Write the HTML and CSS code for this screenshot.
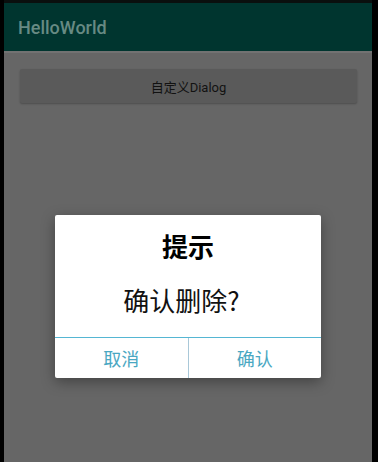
FILE: index.html
```html
<!DOCTYPE html>
<html lang="zh">
<head>
<meta charset="utf-8">
<title>HelloWorld</title>
<link rel="stylesheet" href="styles.css">
</head>
<body>
<div class="screen">
  <div class="app">
    <div class="statusbar"></div>
    <div class="toolbar"><span class="toolbar-title">HelloWorld</span></div>
    <div class="toolbar-edge"></div>
    <div class="content">
      <div class="btn">自定义Dialog</div>
    </div>
    <div class="overlay">
      <div class="dialog">
        <div class="dialog-title">提示</div>
        <div class="dialog-msg">确认删除?</div>
        <div class="dialog-actions">
          <div class="action">取消</div>
          <div class="action action-right">确认</div>
        </div>
      </div>
    </div>
  </div>
</div>
</body>
</html>
```
FILE: styles.css
```css
html, body {
  margin: 0;
  padding: 0;
  background: #000;
}
.screen {
  width: 378px;
  height: 462px;
  background: #000;
  padding: 0 6px 0 4px;
  box-sizing: border-box;
  overflow: hidden;
}
.app {
  position: relative;
  height: 100%;
  display: flex;
  flex-direction: column;
  background: #666666;
  font-family: Roboto, "Noto Sans CJK SC", sans-serif;
}
.statusbar {
  height: 3px;
  background: #0a0f0e;
}
.toolbar {
  height: 48px;
  background: #00352f;
  display: flex;
  align-items: center;
  padding-left: 14px;
}
.toolbar-title {
  color: #678a83;
  font-size: 18px;
  font-weight: 500;
}
.toolbar-edge {
  height: 2px;
  background: #727272;
}
.content {
  flex: 1;
  padding: 16px 15px 0 16px;
}
.btn {
  height: 34px;
  background: #5a5a5a;
  border-radius: 2px;
  box-shadow: 0 1px 2px rgba(0,0,0,0.25);
  display: flex;
  align-items: center;
  justify-content: center;
  color: #121212;
  font-size: 13px;
}
.overlay {
  position: absolute;
  top: 0;
  left: 0;
  right: 0;
  bottom: 0;
  display: flex;
  justify-content: center;
  align-items: flex-start;
  padding-top: 215px;
}
.dialog {
  width: 266px;
  background: #fff;
  border-radius: 2px;
  box-shadow: 0 4px 14px rgba(0,0,0,0.35);
  font-family: "Noto Sans CJK SC", sans-serif;
  display: flex;
  flex-direction: column;
  padding-top: 13px;
}
.dialog-title {
  text-align: center;
  font-size: 26px;
  font-weight: 700;
  line-height: 36px;
  color: #000;
}
.dialog-msg {
  text-align: center;
  font-size: 26px;
  line-height: 36px;
  color: #111;
  margin-top: 18px;
  margin-bottom: 19px;
  padding-right: 13px;
}
.dialog-actions {
  display: flex;
  border-top: 1px solid #55b6d3;
  height: 40px;
}
.action {
  flex: 1;
  display: flex;
  align-items: center;
  justify-content: center;
  font-size: 18px;
  color: #4aa7c2;
}
.action-right {
  border-left: 1px solid #a9c8d8;
}
```
